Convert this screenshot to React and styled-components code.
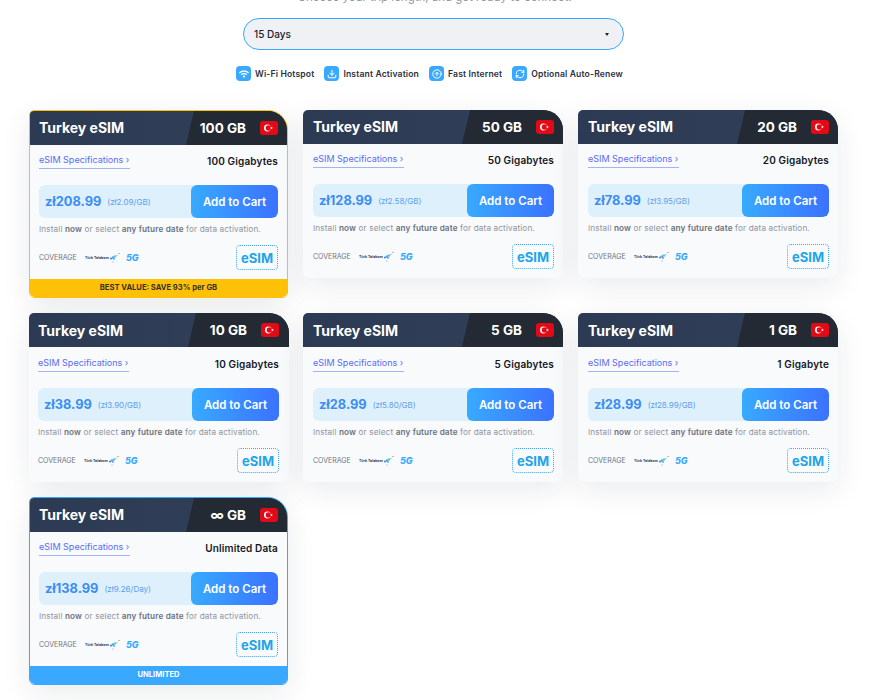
import React from "react";
import styled, { createGlobalStyle } from "styled-components";
import { Download, CircleArrowUp, RefreshCw } from "lucide-react";
import { FaWifi } from "react-icons/fa";

const GlobalStyle = createGlobalStyle`
  html, body {
    margin: 0;
    padding: 0;
    height: 700px;
    overflow: hidden;
    background: #fff;
    font-family: "Inter", "Noto Sans", sans-serif;
  }
`;

const Page = styled.div`
  width: 887px;
  margin-top: -10px;
`;

const Intro = styled.p`
  margin: 0 0 13px;
  height: 15px;
  line-height: 15px;
  width: 869px;
  text-align: center;
  font-size: 11.5px;
  color: #8d97a8;
`;

const SelectBox = styled.div`
  box-sizing: border-box;
  width: 381px;
  height: 32px;
  margin-left: 243px;
  padding: 0 14px 0 10px;
  display: flex;
  align-items: center;
  justify-content: space-between;
  background: #f0f1f5;
  border: 1px solid #38a9ff;
  border-radius: 16px;
  font-size: 10px;
  font-weight: 500;
  color: #1c2230;
`;

const Caret = styled.span`
  width: 0;
  height: 0;
  border-left: 2px solid transparent;
  border-right: 2px solid transparent;
  border-top: 3px solid #1c2230;
`;

const Features = styled.div`
  display: flex;
  gap: 10px;
  margin: 15px 0 0 236px;
  height: 17px;
  align-items: center;
`;

const Feature = styled.div`
  display: flex;
  align-items: center;
  gap: 4px;
  font-size: 8.6px;
  font-weight: 600;
  letter-spacing: 0.15px;
  color: #2a3040;
  white-space: nowrap;
`;

const FeatureIcon = styled.span`
  width: 15px;
  height: 15px;
  border-radius: 4px;
  background: #38a9ff;
  color: #fff;
  display: flex;
  align-items: center;
  justify-content: center;
`;

const Grid = styled.div`
  display: grid;
  grid-template-columns: 274px 275px 260px;
  row-gap: 15px;
  align-items: start;
  margin: 28px 0 0 29px;
`;

const Card = styled.div`
  box-sizing: border-box;
  width: ${(p) => (p.$accent ? "259px" : "260px")};
  background: #f8fafc;
  border-radius: 5px 20px 6px 6px;
  overflow: hidden;
  box-shadow: 0 8px 30px rgba(20, 30, 50, 0.09);
  border: ${(p) => (p.$accent ? `1px solid ${p.$accent}` : "0")};
`;

const CardHeader = styled.div`
  display: flex;
  height: 34px;
  background: linear-gradient(90deg, #2c3a53, #314059);
  color: #fff;
`;

const CardTitle = styled.div`
  flex: 1;
  display: flex;
  align-items: center;
  padding-left: ${(p) => p.$left}px;
  padding-bottom: ${(p) => (p.$tall ? "0" : "2px")};
  font-size: 14px;
  font-weight: 700;
`;

const PlanSide = styled.div`
  box-sizing: border-box;
  width: 101px;
  display: flex;
  align-items: center;
  justify-content: flex-end;
  gap: 14px;
  padding-right: ${(p) => p.$right}px;
  background: #242a33;
  clip-path: polygon(8px 0, 100% 0, 100% 100%, 0 100%);
  font-size: 13.5px;
  font-weight: 700;
  white-space: nowrap;
`;

const CardBody = styled.div`
  padding: 0 ${(p) => p.$right}px 0 ${(p) => p.$left}px;
`;

const SpecRow = styled.div`
  display: flex;
  justify-content: space-between;
  align-items: flex-start;
  padding-top: ${(p) => (p.$tall ? "8px" : "7px")};
`;

const SpecLink = styled.span`
  display: block;
  width: 91px;
  height: 16px;
  line-height: 15px;
  font-size: 9px;
  color: #5a6cf2;
  white-space: nowrap;
  border-bottom: 1px solid #a6b2f8;
`;

const DataLabel = styled.span`
  font-size: 10px;
  line-height: 18px;
  font-weight: 600;
  letter-spacing: 0.15px;
  color: #14181f;
`;

const PriceRow = styled.div`
  display: flex;
  height: 33px;
  margin-top: 15px;
  border-radius: 6px;
  background: #def0fb;
  overflow: hidden;
`;

const PriceInfo = styled.div`
  flex: 1;
  display: flex;
  align-items: center;
  gap: 6px;
  padding-left: 6px;
  white-space: nowrap;
`;

const Price = styled.span`
  font-size: 12.8px;
  font-weight: 700;
  color: #3b8df5;
`;

const PerUnit = styled.span`
  font-size: 8px;
  color: #5c9ff0;
`;

const CartButton = styled.button`
  width: 87px;
  border: 0;
  padding: 0;
  border-radius: 6px;
  background: linear-gradient(90deg, #38aaff, #3b72ff);
  color: #fff;
  font-family: inherit;
  font-size: 11.5px;
  font-weight: 600;
  white-space: nowrap;
`;

const Note = styled.p`
  margin: 6px 0 0;
  line-height: 11px;
  font-size: 8.2px;
  letter-spacing: 0.13px;
  color: #90959e;
  white-space: nowrap;
  b {
    font-weight: 600;
    color: #6d727c;
  }
`;

const CoverageRow = styled.div`
  display: flex;
  align-items: center;
  height: 25px;
  margin-top: 10px;
  padding-bottom: 9px;
`;

const CoverageLabel = styled.span`
  font-size: 7px;
  color: #6f7480;
  width: 46px;
`;

const Carrier = styled.span`
  display: flex;
  align-items: center;
  width: 41px;
  font-size: 3.6px;
  font-weight: 700;
  color: #2d3a5e;
  white-space: nowrap;
`;

const FiveG = styled.span`
  font-size: 9px;
  font-weight: 800;
  font-style: italic;
  color: #38a9ff;
`;

const EsimBadge = styled.span`
  margin-left: auto;
  box-sizing: border-box;
  width: 42px;
  height: 25px;
  display: flex;
  align-items: center;
  justify-content: center;
  border: 1px dotted #38a9ff;
  border-radius: 4px;
  font-size: 13px;
  font-weight: 700;
  color: #1fa5ea;
`;

const Ribbon = styled.div`
  height: 18px;
  line-height: 18px;
  text-align: center;
  font-size: 7.6px;
  font-weight: 700;
  background: ${(p) => p.$accent};
  color: ${(p) => p.$color};
`;

const Flag = () => (
  <svg width="18" height="14" viewBox="0 0 18 14">
    <rect width="18" height="14" rx="3" fill="#e30a17" />
    <circle cx="7.4" cy="7" r="3.4" fill="#fff" />
    <circle cx="8.4" cy="7" r="2.7" fill="#e30a17" />
    <polygon points="11.4,5.6 11.8,6.6 12.9,6.6 12,7.3 12.4,8.3 11.4,7.7 10.5,8.3 10.9,7.3 10,6.6 11.1,6.6" fill="#fff" />
  </svg>
);

const CarrierMark = () => (
  <svg width="12" height="12" viewBox="0 0 12 12">
    <circle cx="2" cy="6.5" r="0.9" fill="#2d6fc0" />
    <circle cx="4" cy="5.5" r="1.2" fill="#38a9ff" />
    <circle cx="6" cy="4.5" r="1.2" fill="#5cc8e8" />
    <circle cx="5" cy="7" r="0.8" fill="#2d6fc0" />
    <circle cx="8" cy="3.5" r="0.8" fill="#8fdcc0" />
    <circle cx="10" cy="1.5" r="0.6" fill="#e3483a" />
    <circle cx="4" cy="10" r="0.6" fill="#38a9ff" />
  </svg>
);

const features = [
  { label: "Wi-Fi Hotspot", Icon: FaWifi },
  { label: "Instant Activation", Icon: Download },
  { label: "Fast Internet", Icon: CircleArrowUp },
  { label: "Optional Auto-Renew", Icon: RefreshCw },
];

const plans = [
  { gb: "100 GB", data: "100 Gigabytes", price: "zł208.99", unit: "(zł2.09/GB)", accent: "#ffc107", ribbon: "BEST VALUE: SAVE 93% per GB", ribbonColor: "#33302a", left: 9, right: 9 },
  { gb: "50 GB", data: "50 Gigabytes", price: "zł128.99", unit: "(zł2.58/GB)", left: 10, right: 9 },
  { gb: "20 GB", data: "20 Gigabytes", price: "zł78.99", unit: "(zł3.95/GB)", left: 10, right: 9 },
  { gb: "10 GB", data: "10 Gigabytes", price: "zł38.99", unit: "(zł3.90/GB)", left: 9, right: 10, tall: true },
  { gb: "5 GB", data: "5 Gigabytes", price: "zł28.99", unit: "(zł5.80/GB)", left: 10, right: 9, tall: true },
  { gb: "1 GB", data: "1 Gigabyte", price: "zł28.99", unit: "(zł28.99/GB)", left: 10, right: 9, tall: true },
  { gb: "∞ GB", data: "Unlimited Data", price: "zł138.99", unit: "(zł9.26/Day)", accent: "#38a9ff", ribbon: "UNLIMITED", ribbonColor: "#fff", left: 9, right: 9 },
];

const PlanCard = ({ plan }) => (
  <Card $accent={plan.accent}>
    <CardHeader>
      <CardTitle $left={plan.left} $tall={plan.tall}>Turkey eSIM</CardTitle>
      <PlanSide $right={plan.right}>
        {plan.gb}
        <Flag />
      </PlanSide>
    </CardHeader>
    <CardBody $left={plan.left} $right={plan.right}>
      <SpecRow $tall={plan.tall}>
        <SpecLink>eSIM Specifications ›</SpecLink>
        <DataLabel>{plan.data}</DataLabel>
      </SpecRow>
      <PriceRow>
        <PriceInfo>
          <Price>{plan.price}</Price>
          <PerUnit>{plan.unit}</PerUnit>
        </PriceInfo>
        <CartButton>Add to Cart</CartButton>
      </PriceRow>
      <Note>
        Install <b>now</b> or select <b>any future date</b> for data activation.
      </Note>
      <CoverageRow>
        <CoverageLabel>COVERAGE</CoverageLabel>
        <Carrier>
          Türk Telekom
          <CarrierMark />
        </Carrier>
        <FiveG>5G</FiveG>
        <EsimBadge>eSIM</EsimBadge>
      </CoverageRow>
    </CardBody>
    {plan.ribbon && (
      <Ribbon $accent={plan.accent} $color={plan.ribbonColor}>
        {plan.ribbon}
      </Ribbon>
    )}
  </Card>
);

export default function App() {
  return (
    <Page>
      <GlobalStyle />
      <Intro>Choose your trip length, and get ready to connect.</Intro>
      <SelectBox>
        15 Days
        <Caret />
      </SelectBox>
      <Features>
        {features.map(({ label, Icon }) => (
          <Feature key={label}>
            <FeatureIcon>
              <Icon size={10} strokeWidth={2.4} />
            </FeatureIcon>
            {label}
          </Feature>
        ))}
      </Features>
      <Grid>
        {plans.map((plan) => (
          <PlanCard key={plan.gb} plan={plan} />
        ))}
      </Grid>
    </Page>
  );
}
